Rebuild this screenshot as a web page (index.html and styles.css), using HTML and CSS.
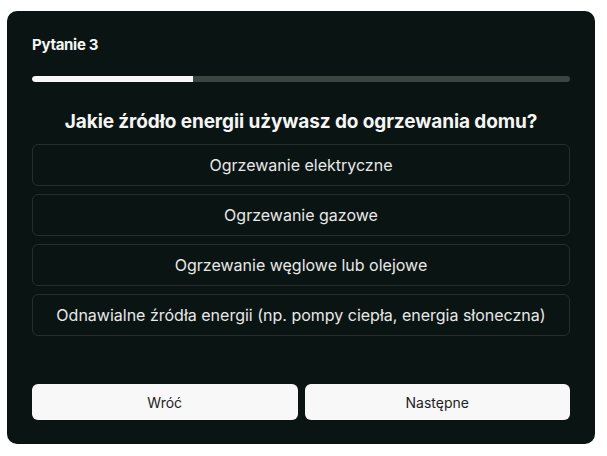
FILE: index.html
```html
<!DOCTYPE html>
<html lang="pl">
<head>
<meta charset="utf-8">
<link rel="stylesheet" href="styles.css">
</head>
<body>
<div class="card">
  <div class="title">Pytanie 3</div>
  <div class="track"><div class="fill" style="width:30%"></div></div>
  <div class="question">Jakie źródło energii używasz do ogrzewania domu?</div>
  <div class="options">
    <div class="option">Ogrzewanie elektryczne</div>
    <div class="option">Ogrzewanie gazowe</div>
    <div class="option">Ogrzewanie węglowe lub olejowe</div>
    <div class="option">Odnawialne źródła energii (np. pompy ciepła, energia słoneczna)</div>
  </div>
  <div class="buttons">
    <button class="btn">Wróć</button>
    <button class="btn">Następne</button>
  </div>
</div>
</body>
</html>
```
FILE: styles.css
```css
html, body { margin: 0; padding: 0; background: #ffffff; }
body { font-family: Inter, "Noto Sans", sans-serif; }
.card {
  margin: 11px 0 0 7px;
  width: 588px;
  height: 433px;
  box-sizing: border-box;
  background: #0a1513;
  border-radius: 10px;
  padding: 25px 25px 24px 25px;
  display: flex;
  flex-direction: column;
}
.title {
  color: #f5f5f5;
  font-weight: 700;
  font-size: 15px;
  line-height: 17px;
  letter-spacing: -0.3px;
}
.track {
  margin-top: 23px;
  height: 6px;
  border-radius: 3px;
  background: #3b4643;
  overflow: hidden;
}
.fill { height: 100%; background: #f8f8f8; border-radius: 3px 0 0 3px; }
.question {
  margin-top: 28px;
  text-align: center;
  color: #f5f5f5;
  font-weight: 700;
  font-size: 19px;
  line-height: 23px;
  letter-spacing: -0.1px;
}
.options {
  margin-top: 11px;
  display: flex;
  flex-direction: column;
  gap: 8px;
}
.option {
  height: 42px;
  box-sizing: border-box;
  border: 1px solid #272d2c;
  border-radius: 6px;
  display: flex;
  align-items: center;
  justify-content: center;
  color: #e8e8e8;
  font-size: 16px;
}
.buttons {
  margin-top: auto;
  display: flex;
  gap: 7px;
}
.btn {
  flex: 1;
  height: 36px;
  border: none;
  border-radius: 6px;
  background: #f8f8f8;
  color: #222222;
  font-family: Inter, "Noto Sans", sans-serif;
  font-size: 14px;
  padding: 0;
}
```
